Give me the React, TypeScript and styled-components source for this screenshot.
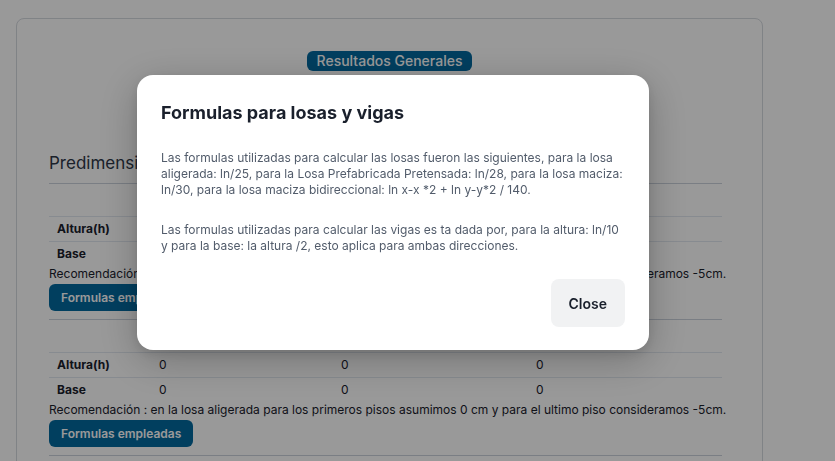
import React from "react";
import styled, { createGlobalStyle } from "styled-components";

const GlobalStyle = createGlobalStyle`
  html, body {
    margin: 0;
    padding: 0;
    background: #ffffff;
    font-family: Inter, "Noto Sans", sans-serif;
    overflow: hidden;
  }
  * { box-sizing: border-box; }
`;

const Page = styled.div`
  padding: 18px 72px 0 16px;
  height: 461px;
  overflow: hidden;
`;

const Card = styled.div`
  border: 1px solid #d6dae0;
  border-radius: 8px;
  padding: 32px 40px 40px 32px;
  min-height: 600px;
`;

const BadgeRow = styled.div`
  display: flex;
  justify-content: center;
  margin-left: 8px;
`;

const Badge = styled.span`
  background: #03699f;
  color: #ffffff;
  font-size: 14px;
  font-weight: 500;
  line-height: 20px;
  padding: 0 10px;
  border-radius: 6px;
`;

const SectionTitle = styled.h2`
  margin: 80px 0 0;
  font-size: 17px;
  font-weight: 400;
  line-height: 24px;
  color: #2d3748;
  padding-bottom: 8px;
  border-bottom: 1px solid #cbd2dc;
`;

const Divider = styled.hr`
  margin: 8px 0 0;
  border: 0;
  border-top: 1px solid #cbd2dc;
`;

const Row = styled.div<{ $head?: boolean; $last?: boolean }>`
  display: grid;
  grid-template-columns: 102px 182px 195px 1fr;
  border-bottom: ${(p) => (p.$last ? "none" : "1px solid #e2e8f0")};
  height: ${(p) => (p.$head ? "33px" : p.$last ? "24px" : "25px")};
  align-items: ${(p) => (p.$head ? "end" : "center")};
  padding-bottom: ${(p) => (p.$head ? "6px" : "0")};
`;

const HeadCell = styled.div`
  padding: 0 8px;
  font-size: 12px;
  font-weight: 500;
  color: #4a5568;
  line-height: 16px;
`;

const Cell = styled.div<{ $label?: boolean }>`
  padding: 0 8px;
  font-size: 12px;
  font-weight: ${(p) => (p.$label ? 700 : 400)};
  color: #1a202c;
  line-height: 16px;
`;

const Note = styled.p`
  margin: 0 0 2px;
  font-size: 12px;
  line-height: 16px;
  color: #1a202c;
  white-space: nowrap;
`;

const ActionButton = styled.button`
  display: block;
  height: 27px;
  padding: 0 12px;
  border: 0;
  border-radius: 6px;
  background: #03699f;
  color: #ffffff;
  font-family: inherit;
  font-size: 12px;
  font-weight: 600;
`;

const Overlay = styled.div`
  position: fixed;
  inset: 0;
  background: rgba(0, 0, 0, 0.4);
  padding: 75px 0 0 137px;
`;

const Modal = styled.div`
  width: 512px;
  background: #ffffff;
  border-radius: 16px;
  box-shadow: 0 10px 40px rgba(0, 0, 0, 0.25), 0 4px 12px rgba(0, 0, 0, 0.1);
`;

const ModalHeader = styled.h3`
  margin: 0;
  padding: 24px 24px 23px;
  font-size: 18px;
  font-weight: 700;
  line-height: 28px;
  color: #1a202c;
`;

const ModalBody = styled.div`
  padding: 0 24px;
  display: flex;
  flex-direction: column;
  gap: 24px;
`;

const BodyText = styled.p`
  margin: 0;
  font-size: 12px;
  line-height: 16px;
  color: #525c6b;
`;

const ModalFooter = styled.div`
  display: flex;
  justify-content: flex-end;
  padding: 25px 24px 23px;
`;

const CloseButton = styled.button`
  height: 48px;
  padding: 0 18px;
  border: 0;
  border-radius: 8px;
  background: #f1f2f3;
  color: #1a202c;
  font-family: inherit;
  font-size: 14px;
  font-weight: 600;
`;

const heads = ["", "Losa Aligerada", "Losa Maciza", "Losa Prefabricada"];
const note =
  "Recomendación : en la losa aligerada para los primeros pisos asumimos 0 cm y para el ultimo piso consideramos -5cm.";

function ResultTable() {
  return (
    <>
      <Row $head>
        {heads.map((h, i) => (
          <HeadCell key={i}>{h}</HeadCell>
        ))}
      </Row>
      <Row>
        <Cell $label>Altura(h)</Cell>
        <Cell>0</Cell>
        <Cell>0</Cell>
        <Cell>0</Cell>
      </Row>
      <Row $last>
        <Cell $label>Base</Cell>
        <Cell>0</Cell>
        <Cell>0</Cell>
        <Cell>0</Cell>
      </Row>
      <Note>{note}</Note>
      <ActionButton>Formulas empleadas</ActionButton>
      <Divider />
    </>
  );
}

export default function App() {
  return (
    <>
      <GlobalStyle />
      <Page>
        <Card>
          <BadgeRow>
            <Badge>Resultados Generales</Badge>
          </BadgeRow>
          <SectionTitle>Predimensionamiento de losas</SectionTitle>
          <ResultTable />
          <ResultTable />
        </Card>
      </Page>
      <Overlay>
        <Modal>
          <ModalHeader>Formulas para losas y vigas</ModalHeader>
          <ModalBody>
            <BodyText>
              Las formulas utilizadas para calcular las losas fueron las siguientes, para la losa
              aligerada: ln/25, para la Losa Prefabricada Pretensada: ln/28, para la losa maciza:
              ln/30, para la losa maciza bidireccional: ln x-x *2 + ln y-y*2 / 140.
            </BodyText>
            <BodyText>
              Las formulas utilizadas para calcular las vigas es ta dada por, para la altura: ln/10
              y para la base: la altura /2, esto aplica para ambas direcciones.
            </BodyText>
          </ModalBody>
          <ModalFooter>
            <CloseButton>Close</CloseButton>
          </ModalFooter>
        </Modal>
      </Overlay>
    </>
  );
}
